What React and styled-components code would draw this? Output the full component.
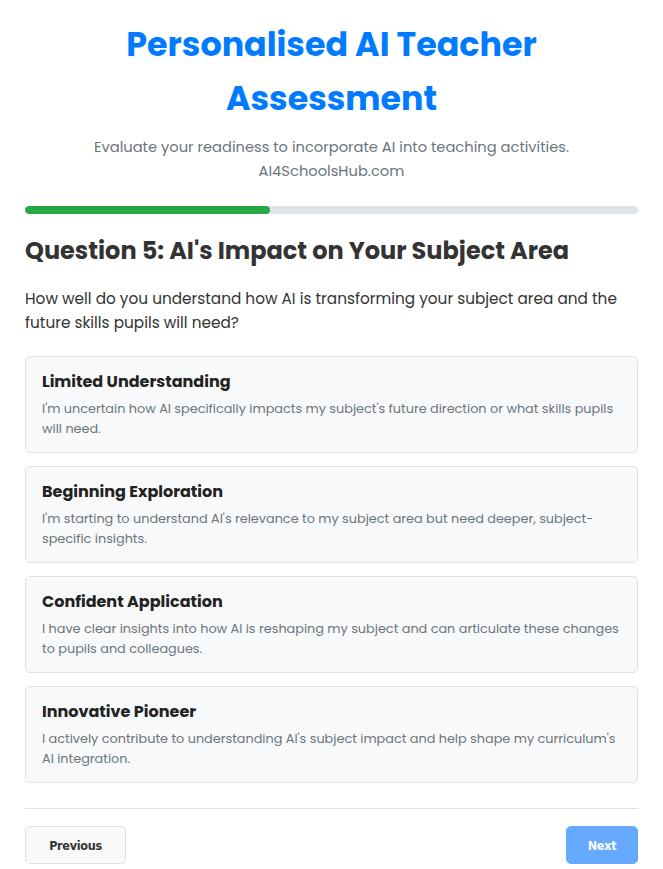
import React, {useState} from 'react'
import styled, {createGlobalStyle} from 'styled-components'

const GlobalStyle = createGlobalStyle`
  body {
    margin: 0;
    background: #fff;
    font-family: "Poppins", "Open Sans", sans-serif;
    color: #333;
  }
`

const Container = styled.div`
  padding: 18px 25px 6px;
`

const Header = styled.header`
  text-align: center;
`

const Title = styled.h1`
  margin: 0;
  font-size: 33.3px;
  line-height: 54px;
  font-weight: 700;
  color: #007bff;
`

const Subtitle = styled.p`
  margin: 9px 0 0;
  font-size: 14.7px;
  line-height: 24px;
  color: #6c757d;
`

const Progress = styled.div`
  margin-top: 23px;
  height: 8px;
  border-radius: 4px;
  background: #e0e3e7;
  overflow: hidden;
`

const Bar = styled.div`
  height: 100%;
  background: #28a745;
  border-radius: 4px;
`

const QuestionTitle = styled.h2`
  margin: 19px 0 0;
  font-size: 24px;
  line-height: 36px;
  font-weight: 700;
  color: #333;
`

const QuestionText = styled.p`
  margin: 18px 0 0;
  font-size: 15.3px;
  line-height: 24px;
  color: #333;
`

const Options = styled.div`
  margin-top: 21px;
  display: flex;
  flex-direction: column;
  gap: 13px;
`

const Option = styled.div`
  background: #f8f9fa;
  border: 1px solid #dee2e6;
  border-radius: 5px;
  padding: 13px 16px 13px;
  cursor: pointer;
`

const OptionTitle = styled.div`
  font-size: 16px;
  line-height: 24px;
  font-weight: 700;
  color: #222;
`

const OptionDesc = styled.div`
  margin-top: 5px;
  font-size: 12.82px;
  line-height: 20px;
  color: #6c757d;
`

const Footer = styled.div`
  margin-top: 25px;
  padding-top: 17px;
  border-top: 1px solid #dee2e6;
  display: flex;
  justify-content: space-between;
`

const Button = styled.button`
  height: 38px;
  min-width: ${p => p.$primary ? '72px' : '101px'};
  padding: 0 20px;
  border-radius: 5px;
  font-family: "DejaVu Sans", sans-serif;
  font-stretch: condensed;
  font-size: 12.5px;
  font-weight: 700;
  letter-spacing: -0.3px;
  border: 1px solid ${p => p.$primary ? '#66aaff' : '#dee2e6'};
  background: ${p => p.$primary ? '#66aaff' : '#f8f9fa'};
  color: ${p => p.$primary ? '#fff' : '#333'};
`

const options = [
  {
    title: 'Limited Understanding',
    desc: "I'm uncertain how AI specifically impacts my subject's future direction or what skills pupils will need.",
  },
  {
    title: 'Beginning Exploration',
    desc: "I'm starting to understand AI's relevance to my subject area but need deeper, subject-specific insights.",
  },
  {
    title: 'Confident Application',
    desc: 'I have clear insights into how AI is reshaping my subject and can articulate these changes to pupils and colleagues.',
  },
  {
    title: 'Innovative Pioneer',
    desc: "I actively contribute to understanding AI's subject impact and help shape my curriculum's AI integration.",
  },
]

const App = () => {
    const [selected, setSelected] = useState(null)
    const progress = 40

    return (
        <Container>
            <GlobalStyle/>
            <Header>
                <Title>Personalised AI Teacher<br/>Assessment</Title>
                <Subtitle>Evaluate your readiness to incorporate AI into teaching activities.<br/>AI4SchoolsHub.com</Subtitle>
            </Header>
            <Progress>
                <Bar style={{width: `${progress}%`}}/>
            </Progress>
            <QuestionTitle>Question 5: AI's Impact on Your Subject Area</QuestionTitle>
            <QuestionText>How well do you understand how AI is transforming your subject area and the future skills pupils will need?</QuestionText>
            <Options>
                {options.map((o, i) => (
                    <Option key={o.title} onClick={() => setSelected(i)}>
                        <OptionTitle>{o.title}</OptionTitle>
                        <OptionDesc>{o.desc}</OptionDesc>
                    </Option>
                ))}
            </Options>
            <Footer>
                <Button>Previous</Button>
                <Button $primary disabled={selected === null}>Next</Button>
            </Footer>
        </Container>
    )
}

export default App
